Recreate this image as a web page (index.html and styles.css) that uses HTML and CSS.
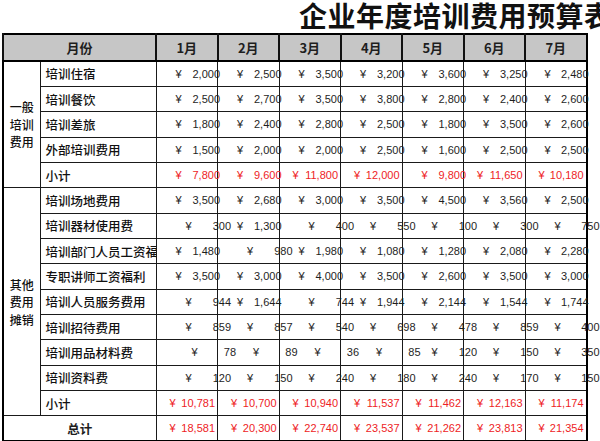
FILE: index.html
```html
<!DOCTYPE html>
<html lang="zh">
<head>
<meta charset="utf-8">
<title>企业年度培训费用预算表</title>
<link rel="stylesheet" href="styles.css">
</head>
<body>
<div class="title">企业年度培训费用预算表</div>
<table class="sheet">
  <colgroup>
    <col class="c-cat"><col class="c-item">
    <col class="c-m"><col class="c-m"><col class="c-m"><col class="c-m"><col class="c-m"><col class="c-m"><col class="c-m">
  </colgroup>
  <thead>
    <tr class="hd">
      <th colspan="2">月份</th>
      <th>1月</th><th>2月</th><th>3月</th><th>4月</th><th>5月</th><th>6月</th><th>7月</th>
    </tr>
  </thead>
  <tbody>
    <tr>
      <td class="cat" rowspan="5">一般<br>培训<br>费用</td>
      <td class="lbl">培训住宿</td>
      <td><div class="a">¥<span>2,000</span></div></td>
      <td><div class="a">¥<span>2,500</span></div></td>
      <td><div class="a">¥<span>3,500</span></div></td>
      <td><div class="a">¥<span>3,200</span></div></td>
      <td><div class="a">¥<span>3,600</span></div></td>
      <td><div class="a">¥<span>3,250</span></div></td>
      <td><div class="a">¥<span>2,480</span></div></td>
    </tr>
    <tr>
      <td class="lbl">培训餐饮</td>
      <td><div class="a">¥<span>2,500</span></div></td>
      <td><div class="a">¥<span>2,700</span></div></td>
      <td><div class="a">¥<span>3,500</span></div></td>
      <td><div class="a">¥<span>3,800</span></div></td>
      <td><div class="a">¥<span>2,800</span></div></td>
      <td><div class="a">¥<span>2,400</span></div></td>
      <td><div class="a">¥<span>2,600</span></div></td>
    </tr>
    <tr>
      <td class="lbl">培训差旅</td>
      <td><div class="a">¥<span>1,800</span></div></td>
      <td><div class="a">¥<span>2,400</span></div></td>
      <td><div class="a">¥<span>2,800</span></div></td>
      <td><div class="a">¥<span>2,500</span></div></td>
      <td><div class="a">¥<span>1,800</span></div></td>
      <td><div class="a">¥<span>3,500</span></div></td>
      <td><div class="a">¥<span>2,600</span></div></td>
    </tr>
    <tr>
      <td class="lbl">外部培训费用</td>
      <td><div class="a">¥<span>1,500</span></div></td>
      <td><div class="a">¥<span>2,000</span></div></td>
      <td><div class="a">¥<span>2,000</span></div></td>
      <td><div class="a">¥<span>2,500</span></div></td>
      <td><div class="a">¥<span>1,600</span></div></td>
      <td><div class="a">¥<span>2,500</span></div></td>
      <td><div class="a">¥<span>2,500</span></div></td>
    </tr>
    <tr class="red">
      <td class="lbl">小计</td>
      <td><div class="a">¥<span>7,800</span></div></td>
      <td><div class="a">¥<span>9,600</span></div></td>
      <td><div class="a w5">¥<span>11,800</span></div></td>
      <td><div class="a w5">¥<span>12,000</span></div></td>
      <td><div class="a">¥<span>9,800</span></div></td>
      <td><div class="a w5">¥<span>11,650</span></div></td>
      <td><div class="a w5">¥<span>10,180</span></div></td>
    </tr>
    <tr>
      <td class="cat" rowspan="9">其他<br>费用<br>摊销</td>
      <td class="lbl">培训场地费用</td>
      <td><div class="a">¥<span>3,500</span></div></td>
      <td><div class="a">¥<span>2,680</span></div></td>
      <td><div class="a">¥<span>3,000</span></div></td>
      <td><div class="a">¥<span>3,500</span></div></td>
      <td><div class="a">¥<span>4,500</span></div></td>
      <td><div class="a">¥<span>3,560</span></div></td>
      <td><div class="a">¥<span>2,500</span></div></td>
    </tr>
    <tr>
      <td class="lbl">培训器材使用费</td>
      <td><div class="a w3">¥<span>300</span></div></td>
      <td><div class="a">¥<span>1,300</span></div></td>
      <td><div class="a w3">¥<span>400</span></div></td>
      <td><div class="a w3">¥<span>550</span></div></td>
      <td><div class="a w3">¥<span>100</span></div></td>
      <td><div class="a w3">¥<span>300</span></div></td>
      <td><div class="a w3">¥<span>750</span></div></td>
    </tr>
    <tr>
      <td class="lbl">培训部门人员工资福利</td>
      <td><div class="a">¥<span>1,480</span></div></td>
      <td><div class="a w3">¥<span>980</span></div></td>
      <td><div class="a">¥<span>1,980</span></div></td>
      <td><div class="a">¥<span>1,080</span></div></td>
      <td><div class="a">¥<span>1,280</span></div></td>
      <td><div class="a">¥<span>2,080</span></div></td>
      <td><div class="a">¥<span>2,280</span></div></td>
    </tr>
    <tr>
      <td class="lbl">专职讲师工资福利</td>
      <td><div class="a">¥<span>3,500</span></div></td>
      <td><div class="a">¥<span>3,000</span></div></td>
      <td><div class="a">¥<span>4,000</span></div></td>
      <td><div class="a">¥<span>3,500</span></div></td>
      <td><div class="a">¥<span>2,600</span></div></td>
      <td><div class="a">¥<span>3,500</span></div></td>
      <td><div class="a">¥<span>3,000</span></div></td>
    </tr>
    <tr>
      <td class="lbl">培训人员服务费用</td>
      <td><div class="a w3">¥<span>944</span></div></td>
      <td><div class="a">¥<span>1,644</span></div></td>
      <td><div class="a w3">¥<span>744</span></div></td>
      <td><div class="a">¥<span>1,944</span></div></td>
      <td><div class="a">¥<span>2,144</span></div></td>
      <td><div class="a">¥<span>1,544</span></div></td>
      <td><div class="a">¥<span>1,744</span></div></td>
    </tr>
    <tr>
      <td class="lbl">培训招待费用</td>
      <td><div class="a w3">¥<span>859</span></div></td>
      <td><div class="a w3">¥<span>857</span></div></td>
      <td><div class="a w3">¥<span>540</span></div></td>
      <td><div class="a w3">¥<span>698</span></div></td>
      <td><div class="a w3">¥<span>478</span></div></td>
      <td><div class="a w3">¥<span>859</span></div></td>
      <td><div class="a w3">¥<span>400</span></div></td>
    </tr>
    <tr>
      <td class="lbl">培训用品材料费</td>
      <td><div class="a w2">¥<span>78</span></div></td>
      <td><div class="a w2">¥<span>89</span></div></td>
      <td><div class="a w2">¥<span>36</span></div></td>
      <td><div class="a w2">¥<span>85</span></div></td>
      <td><div class="a w3">¥<span>120</span></div></td>
      <td><div class="a w3">¥<span>150</span></div></td>
      <td><div class="a w3">¥<span>350</span></div></td>
    </tr>
    <tr>
      <td class="lbl">培训资料费</td>
      <td><div class="a w3">¥<span>120</span></div></td>
      <td><div class="a w3">¥<span>150</span></div></td>
      <td><div class="a w3">¥<span>240</span></div></td>
      <td><div class="a w3">¥<span>180</span></div></td>
      <td><div class="a w3">¥<span>240</span></div></td>
      <td><div class="a w3">¥<span>170</span></div></td>
      <td><div class="a w3">¥<span>150</span></div></td>
    </tr>
    <tr class="red">
      <td class="lbl">小计</td>
      <td><div class="a w5">¥<span>10,781</span></div></td>
      <td><div class="a w5">¥<span>10,700</span></div></td>
      <td><div class="a w5">¥<span>10,940</span></div></td>
      <td><div class="a w5">¥<span>11,537</span></div></td>
      <td><div class="a w5">¥<span>11,462</span></div></td>
      <td><div class="a w5">¥<span>12,163</span></div></td>
      <td><div class="a w5">¥<span>11,174</span></div></td>
    </tr>
    <tr class="red total">
      <td class="tot" colspan="2">总计</td>
      <td><div class="a w5">¥<span>18,581</span></div></td>
      <td><div class="a w5">¥<span>20,300</span></div></td>
      <td><div class="a w5">¥<span>22,740</span></div></td>
      <td><div class="a w5">¥<span>23,537</span></div></td>
      <td><div class="a w5">¥<span>21,262</span></div></td>
      <td><div class="a w5">¥<span>23,813</span></div></td>
      <td><div class="a w5">¥<span>21,354</span></div></td>
    </tr>
  </tbody>
</table>
</body>
</html>
```
FILE: styles.css
```css
html, body {
  margin: 0;
  padding: 0;
  background: #ffffff;
  overflow: hidden;
}

body {
  font-family: "Noto Sans CJK SC", "Liberation Sans", sans-serif;
  color: #1e1e1e;
}

.title {
  padding-left: 299px;
  height: 30px;
  line-height: 30px;
  font-size: 28px;
  font-weight: bold;
  letter-spacing: 0.5px;
  white-space: nowrap;
  color: #111;
}

.sheet {
  margin: 3px 0 0 2px;
  width: 584px;
  table-layout: fixed;
  border-collapse: collapse;
  border: 2px solid #000;
}

.c-cat { width: 37px; }
.c-item { width: 116px; }
.c-m { width: 61.5px; }

.sheet th,
.sheet td {
  padding: 0;
  border: 1px solid #1a1a1a;
  overflow: visible;
}

.hd {
  height: 27px;
}

.hd th {
  background: #c6c6c6;
  font-size: 13px;
  font-weight: bold;
  text-align: center;
  border-bottom: 2px solid #000;
  border-left: 2px solid #111;
}

.sheet tbody tr {
  height: 25.35px;
}

.sheet .cat {
  font-size: 12px;
  line-height: 17.5px;
  font-weight: 500;
  text-align: center;
  vertical-align: middle;
  white-space: nowrap;
  color: #111;
}

.sheet .lbl {
  font-size: 12.5px;
  font-weight: 500;
  padding-left: 5px;
  white-space: nowrap;
  overflow: hidden;
  text-overflow: clip;
  color: #111;
}

.sheet .tot {
  font-size: 12.5px;
  font-weight: bold;
  text-align: center;
  color: #1e1e1e;
}

.a {
  display: flex;
  justify-content: space-between;
  align-items: center;
  padding-left: 19px;
  font-family: "Liberation Sans", "Noto Sans", sans-serif;
  font-size: 11px;
  white-space: nowrap;
}

.a span {
  margin-right: -3px;
}

.a.w5 {
  padding-left: 13px;
}
.a.w5 span {
  margin-right: 2px;
}

.a.w3 {
  padding-left: 29px;
}
.a.w3 span {
  margin-right: -14px;
}

.a.w2 {
  padding-left: 35px;
}
.a.w2 span {
  margin-right: -19px;
}

.red .a {
  color: #ee1c25;
}
```
